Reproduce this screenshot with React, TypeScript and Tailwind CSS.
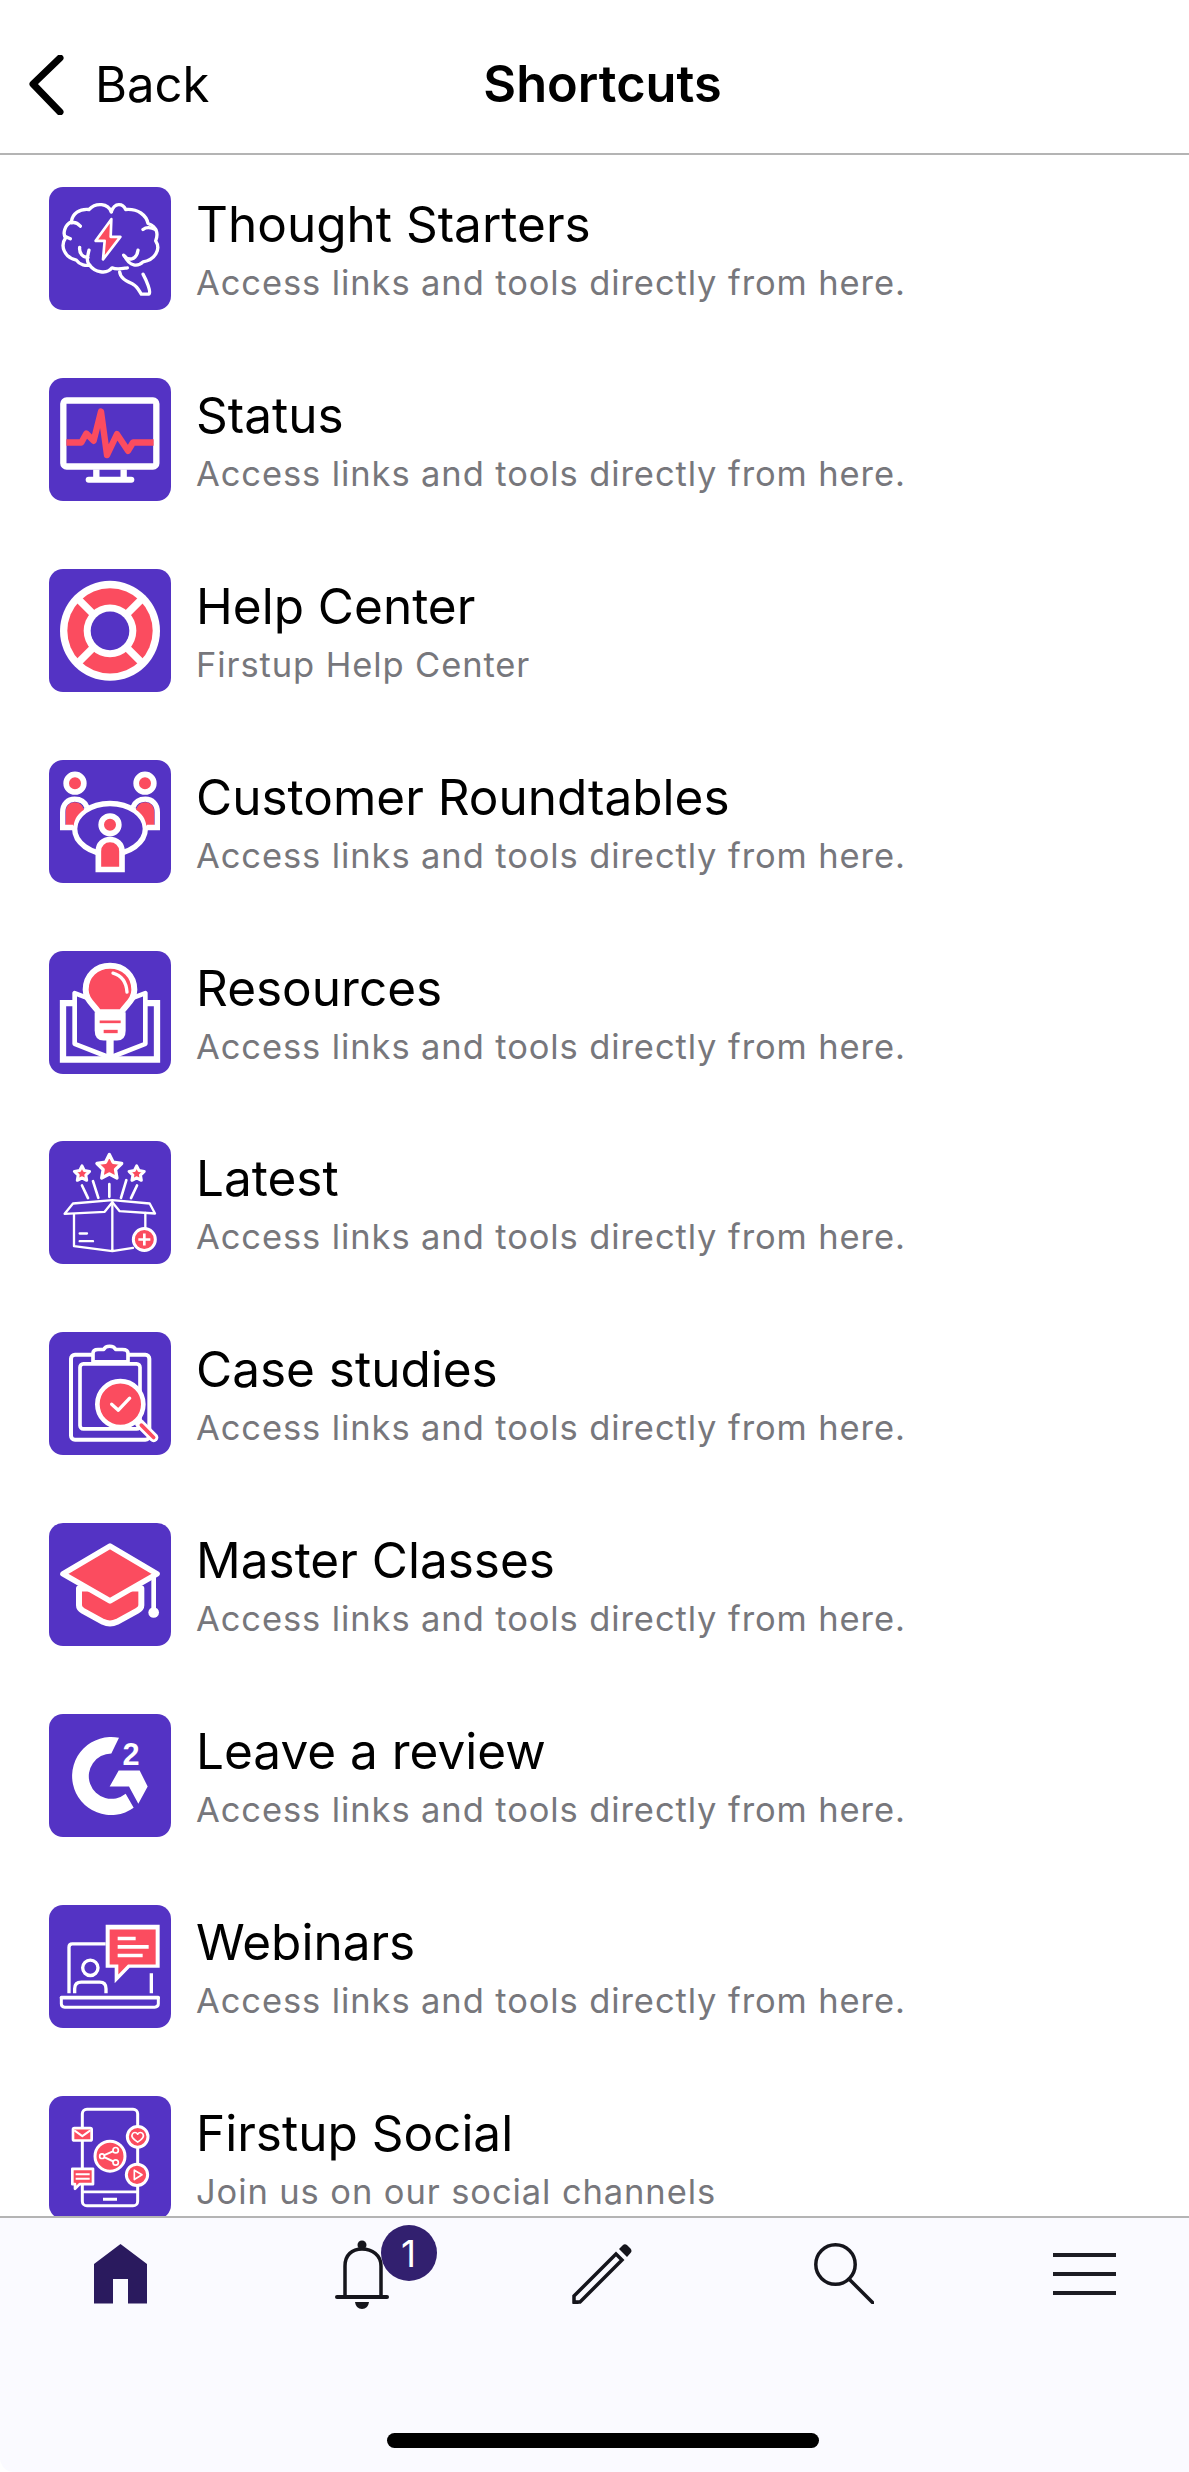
import type { ReactNode } from "react";

const RED = "#fb4c5f";

function Tile({ top, children }: { top: number; children: ReactNode }) {
  return (
    <svg
      viewBox={`58 ${top} 366 366`}
      className="h-[123px] w-[122px] shrink-0 rounded-[14px] bg-[#5433c4]"
      fill="none"
      stroke="#fff"
      strokeLinecap="round"
      strokeLinejoin="round"
    >
      {children}
    </svg>
  );
}

function Brain() {
  return (
    <Tile top={52}>
      <g strokeWidth={10}>
        <path d="M245 125C235 100 200 95 178 118C150 115 128 130 125 155C105 165 98 190 108 203C90 228 105 262 140 270C150 285 170 287 180 285C195 305 230 315 247 293C262 300 280 295 293 293" />
        <path d="M245 125C255 95 280 100 288 118C325 115 350 135 355 160C385 170 385 195 378 212C395 238 375 270 340 275C325 290 300 290 285 258" />
        <path d="M270 305C272 325 290 332 310 342C325 350 330 365 335 372H358C365 365 350 330 340 312" />
        <path d="M125 158C135 155 145 160 152 168M105 198L122 206M150 232C148 250 160 262 175 262M178 240C172 265 170 275 180 285M340 178C350 170 365 172 378 178M282 255C295 272 320 272 325 240" />
      </g>
      <path d="M245 147L198 212H225L220 268L272 200H243Z" fill={RED} strokeWidth={8} />
    </Tile>
  );
}

function Monitor() {
  return (
    <Tile top={625}>
      <rect x={101} y={691} width={279} height={198} rx={10} strokeWidth={19} />
      <path d="M200 898V922M282 898V922" strokeWidth={19} strokeLinecap="butt" />
      <rect x={168} y={920} width={146} height={18} rx={9} fill="#fff" stroke="none" />
      <path
        d="M110 817H155L170 790L192 812L214 724L232 855L262 792L295 842L310 817H372"
        stroke={RED}
        strokeWidth={19}
        strokeLinecap="butt"
      />
    </Tile>
  );
}

function Lifebuoy() {
  return (
    <Tile top={57}>
      <circle cx={241} cy={241} r={150} fill="#fff" stroke="none" />
      <circle cx={241} cy={241} r={128} fill={RED} stroke="none" />
      <path d="M145 145L337 337M337 145L145 337" strokeWidth={22} strokeLinecap="butt" />
      <circle cx={241} cy={241} r={79} fill="#fff" stroke="none" />
      <circle cx={241} cy={241} r={58} fill="#5433c4" stroke="none" />
    </Tile>
  );
}

function Roundtable() {
  return (
    <Tile top={630}>
      <ellipse cx={241} cy={835} rx={106} ry={76} strokeWidth={16} />
      <g strokeWidth={17} strokeLinecap="butt" strokeLinejoin="miter">
        <circle cx={136} cy={698} r={26.5} fill={RED} />
        <circle cx={346} cy={698} r={26.5} fill={RED} />
        <circle cx={241} cy={823} r={26.5} fill={RED} />
      </g>
      <path d="M108 825V785C108 765 120 755 135 755C150 755 160 765 163 778C145 790 135 805 132 825Z" fill={RED} stroke="none" />
      <path d="M374 825V785C374 765 362 755 347 755C332 755 322 765 319 778C337 790 347 805 350 825Z" fill={RED} stroke="none" />
      <path d="M130 831H99V785C99 760 115 746 135 746C152 746 166 755 172 770" strokeWidth={16} strokeLinecap="butt" strokeLinejoin="miter" />
      <path d="M352 831H383V785C383 760 367 746 347 746C330 746 316 755 310 770" strokeWidth={16} strokeLinecap="butt" strokeLinejoin="miter" />
      <path d="M206 957V902C206 880 222 867 241 867C260 867 277 880 277 902V957Z" fill={RED} strokeWidth={17} strokeLinejoin="miter" />
    </Tile>
  );
}

function BulbBook() {
  return (
    <Tile top={63}>
      <path d="M137 218H100V387H382V218H345" strokeWidth={19} strokeLinecap="butt" strokeLinejoin="miter" />
      <path d="M180 205L135 188V340L232 378M302 205L347 188V340L250 378" strokeWidth={14} />
      <path d="M241 320V380" strokeWidth={22} strokeLinecap="butt" />
      <path d="M195 245H288V300Q288 330 262 330H222Q195 330 195 300Z" fill="#fff" stroke="none" />
      <path d="M207 245C190 220 168 208 168 178C168 135 200 106 241 106C282 106 314 135 314 178C314 208 292 220 275 245Z" fill={RED} strokeWidth={18} />
      <path d="M250 128C275 135 290 155 292 185" strokeWidth={10} />
      <rect x={210} y={270} width={63} height={8} fill={RED} stroke="none" />
      <rect x={222} y={298} width={42} height={10} fill={RED} stroke="none" />
    </Tile>
  );
}

function starPath(cx: number, cy: number, r: number) {
  const pts: string[] = [];
  for (let i = 0; i < 10; i++) {
    const rad = i % 2 === 0 ? r : r * 0.5;
    const a = (Math.PI / 5) * i - Math.PI / 2;
    pts.push(`${(cx + rad * Math.cos(a)).toFixed(1)},${(cy + rad * Math.sin(a)).toFixed(1)}`);
  }
  return pts.join(" ");
}

function GiftBox() {
  return (
    <Tile top={636}>
      <polygon points={starPath(239, 714, 39)} fill={RED} strokeWidth={10} />
      <polygon points={starPath(157, 733, 24)} fill={RED} strokeWidth={9} />
      <polygon points={starPath(321, 733, 24)} fill={RED} strokeWidth={9} />
      <path d="M157 768L175 806M190 755L206 805M239 764V802M290 752L274 805M322 768L304 806" strokeWidth={8} />
      <path d="M105 853L130 822L248 812L360 822L376 852L270 845L248 818L225 847Z" strokeWidth={7} />
      <path d="M133 855V950L248 965L310 955M248 820V965M347 850V895" strokeWidth={7} />
      <path d="M150 912H172M150 935H190" strokeWidth={7} />
      <circle cx={344} cy={930} r={33} fill={RED} strokeWidth={9} />
      <path d="M344 912V948M326 930H362" strokeWidth={8} strokeLinecap="butt" />
    </Tile>
  );
}

function Clipboard() {
  return (
    <Tile top={67}>
      <rect x={124} y={134} width={235} height={255} rx={12} strokeWidth={12} />
      <rect x={151} y={161} width={180} height={195} rx={10} strokeWidth={11} />
      <path d="M190 155V130Q190 118 205 118H222C228 105 252 105 258 118H278Q295 118 295 130V155Z" fill="#5433c4" strokeWidth={11} />
      <path d="M330 340L372 382" strokeWidth={28} />
      <path d="M335 345L372 382" stroke={RED} strokeWidth={11} />
      <circle cx={272} cy={282} r={69} fill={RED} strokeWidth={14} />
      <path d="M246 282L266 300L300 264" strokeWidth={10} />
    </Tile>
  );
}

function GradCap() {
  return (
    <Tile top={640}>
      <path d="M148 835V885Q148 895 160 902L220 935Q241 945 262 935L322 902Q335 895 335 885V835Z" fill={RED} strokeWidth={18} />
      <path d="M241 708L382 791L241 872L100 791Z" fill={RED} strokeWidth={17} />
      <path d="M372 800V905" strokeWidth={14} strokeLinecap="butt" />
      <circle cx={372} cy={907} r={16} fill="#fff" stroke="none" />
    </Tile>
  );
}

function G2() {
  return (
    <Tile top={72}>
      <path d="M268 142A117 117 0 1 0 312 352L288 310A68 68 0 1 1 245 189Z" fill="#fff" stroke="none" />
      <polygon points="267,240 330,240 354,288 326,340 298,288 240,288" fill="#fff" stroke="none" />
      <text
        x={304}
        y={222}
        fill="#fff"
        stroke="none"
        fontSize={92}
        fontWeight={700}
        textAnchor="middle"
        fontFamily="'Liberation Sans', sans-serif"
      >
        2
      </text>
    </Tile>
  );
}

function Webinar() {
  return (
    <Tile top={645}>
      <path d="M118 908V770Q118 760 128 760H228M365 848V908" strokeWidth={10} strokeLinecap="butt" />
      <circle cx={182} cy={832} r={23} strokeWidth={10} />
      <path d="M135 908V895Q135 875 155 875H210Q229 875 229 895V908" strokeWidth={10} strokeLinecap="butt" />
      <path d="M95 920H386V940Q386 950 375 950H105Q95 950 95 940Z" strokeWidth={9} />
      <path d="M95 922H386" strokeWidth={10} />
      <polygon points="228,703 390,703 390,832 300,832 255,878 255,832 228,832" fill="#fff" stroke="none" />
      <polygon points="240,717 378,717 378,822 295,822 266,852 266,822 240,822" fill={RED} stroke="none" />
      <path d="M264 744H318M264 769H357M264 795H339" strokeWidth={11} strokeLinecap="butt" />
    </Tile>
  );
}

function Phone() {
  return (
    <Tile top={47}>
      <rect x={158} y={85} width={166} height={290} rx={14} strokeWidth={9} />
      <path d="M158 333H324" strokeWidth={8} />
      <path d="M220 355H262" strokeWidth={9} strokeLinecap="butt" />
      <circle cx={241} cy={226} r={45} fill={RED} strokeWidth={9} />
      <path d="M217 226L258 208M217 226L258 245" strokeWidth={6} />
      <circle cx={217} cy={226} r={7} fill={RED} strokeWidth={5} />
      <circle cx={258} cy={208} r={8} fill={RED} strokeWidth={5} />
      <circle cx={258} cy={245} r={8} fill={RED} strokeWidth={5} />
      <rect x={130} y={142} width={56} height={37} rx={4} fill={RED} strokeWidth={8} />
      <path d="M136 150L158 166L180 150" strokeWidth={6} />
      <circle cx={324} cy={168} r={31} fill={RED} strokeWidth={9} />
      <path d="M324 184C308 174 305 165 308 160C312 153 320 154 324 160C328 154 336 153 340 160C343 165 340 174 324 184Z" strokeWidth={5} />
      <circle cx={322} cy={282} r={32} fill={RED} strokeWidth={9} />
      <path d="M314 268L337 282L314 296Z" strokeWidth={5} />
      <path d="M128 264H190V310H150L136 324V310H128Z" fill={RED} strokeWidth={8} />
      <path d="M138 280H180M138 294H180" strokeWidth={6} strokeLinecap="butt" />
    </Tile>
  );
}

const shortcuts = [
  { title: "Thought Starters", sub: "Access links and tools directly from here.", icon: <Brain /> },
  { title: "Status", sub: "Access links and tools directly from here.", icon: <Monitor /> },
  { title: "Help Center", sub: "Firstup Help Center", icon: <Lifebuoy /> },
  { title: "Customer Roundtables", sub: "Access links and tools directly from here.", icon: <Roundtable /> },
  { title: "Resources", sub: "Access links and tools directly from here.", icon: <BulbBook /> },
  { title: "Latest", sub: "Access links and tools directly from here.", icon: <GiftBox /> },
  { title: "Case studies", sub: "Access links and tools directly from here.", icon: <Clipboard /> },
  { title: "Master Classes", sub: "Access links and tools directly from here.", icon: <GradCap /> },
  { title: "Leave a review", sub: "Access links and tools directly from here.", icon: <G2 /> },
  { title: "Webinars", sub: "Access links and tools directly from here.", icon: <Webinar /> },
  { title: "Firstup Social", sub: "Join us on our social channels", icon: <Phone /> },
];

export default function App() {
  return (
    <div className="flex h-[2472px] w-[1189px] flex-col overflow-hidden bg-white font-['Inter',sans-serif] text-black">
      <header className="relative flex h-[155px] shrink-0 items-center border-b-2 border-[#b4b4b4] pt-[16px] pl-[29px]">
        <svg viewBox="0 0 36 60" className="h-[60px] w-[36px]" fill="none" stroke="#000" strokeWidth={7} strokeLinecap="round" strokeLinejoin="round">
          <path d="M31 3L4 29L31 57" />
        </svg>
        <span className="ml-[30px] text-[49px] leading-none">Back</span>
        <h1 className="absolute left-0 w-[1205px] text-center text-[50.5px] leading-none font-semibold">Shortcuts</h1>
      </header>

      <main className="min-h-0 flex-1 overflow-hidden pt-[32px]">
        {shortcuts.map((s) => (
          <div key={s.title} className="flex h-[190.9px] items-start gap-[26px] pl-[49px]">
            {s.icon}
            <div className="-ml-[1px] flex flex-col">
              <div className="mt-[7px] text-[49.5px] leading-[60px] whitespace-nowrap">{s.title}</div>
              <div className="mt-[2px] text-[34.5px] leading-[54px] tracking-[0.9px] whitespace-nowrap text-[#77777c]">{s.sub}</div>
            </div>
          </div>
        ))}
      </main>

      <nav className="relative h-[256px] shrink-0 rounded-bl-[14px] border-t-2 border-[#b4b4b4] bg-[#fafaff]">
        <div className="grid w-[1205px] grid-cols-5">
          <div className="flex justify-center pt-[26px]">
            <svg viewBox="0 0 53 60" className="h-[60px] w-[53px]" fill="#2a1a5e">
              <path d="M26.5 0L53 20V59.5H34V35H19V59.5H0V20Z" />
            </svg>
          </div>
          <div className="flex justify-center pt-[22px]">
            <div className="relative h-[69px] w-[54px]">
              <svg viewBox="0 0 54 69" className="h-[69px] w-[54px]" fill="none" stroke="#15151c" strokeWidth={3.5}>
                <path d="M10 56V26C10 15 17 9 27 9C37 9 46 15 46 26V56" />
                <circle cx={27} cy={5} r={4.5} fill="#15151c" stroke="none" />
                <rect x={0} y={55} width={54} height={4} rx={2} fill="#15151c" stroke="none" />
                <path d="M20 62H34Q33 69 27 69Q21 69 20 62Z" fill="#15151c" stroke="none" />
              </svg>
              <span className="absolute top-[-15px] left-[46px] flex h-[56px] w-[56px] items-center justify-center rounded-full bg-[#32206f] text-[37px] leading-none font-normal text-white">
                1
              </span>
            </div>
          </div>
          <div className="flex justify-center pt-[26px]">
            <svg viewBox="0 0 61 60" className="h-[60px] w-[61px]" fill="none" stroke="#15151c" strokeWidth={3.5}>
              <path d="M2 58V52L44 10L50 16L8 58Z" strokeLinejoin="miter" />
              <path d="M1 60V54L7 60Z" fill="#15151c" stroke="none" />
              <path d="M47 5L51 1Q53 -0.5 55.5 1.5L58.5 4.5Q60.5 7 58.5 9L55 13Z" fill="#15151c" stroke="none" />
            </svg>
          </div>
          <div className="flex justify-center pt-[25px]">
            <svg viewBox="0 0 60 61" className="h-[61px] w-[60px]" fill="none" stroke="#15151c" strokeWidth={3.5}>
              <circle cx={21.5} cy={21.5} r={19.7} />
              <path d="M35 36L59 60" strokeLinecap="round" />
            </svg>
          </div>
          <div className="flex justify-center pt-[35px]">
            <div className="flex h-[42px] w-[63px] flex-col justify-between">
              <div className="h-[4px] bg-[#1c1c24]" />
              <div className="h-[4px] bg-[#1c1c24]" />
              <div className="h-[4px] bg-[#1c1c24]" />
            </div>
          </div>
        </div>
        <div className="absolute top-[215px] left-[387px] h-[15px] w-[432px] rounded-full bg-black" />
      </nav>
    </div>
  );
}
